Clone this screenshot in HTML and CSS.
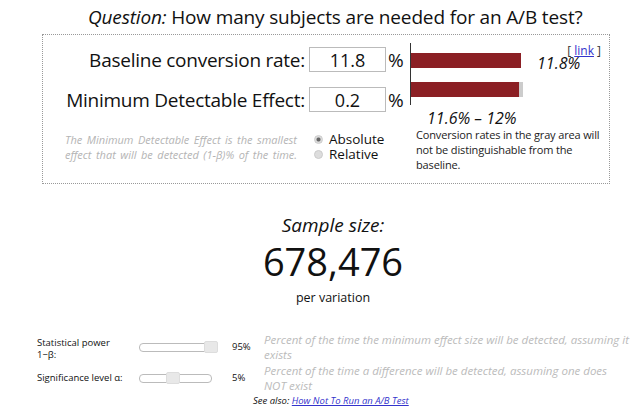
FILE: index.html
```html
<!DOCTYPE html>
<html lang="en">
  <head>
    <meta charset="utf-8" />
    <title>Sample Size Calculator</title>
    <meta name="viewport" content="width=device-width, initial-scale=1" />
    <link rel="stylesheet" href="styles.css">
  </head>

  <body>
    <h1 class="question"><em>Question:</em> How many subjects are needed for an A/B test?</h1>

    <div class="box">
      <div class="form">
        <div class="row">
          <label class="label">Baseline conversion rate:</label>
          <input class="num" type="text" value="11.8" />
          <span class="pct">%</span>
        </div>
        <div class="row">
          <label class="label">Minimum Detectable Effect:</label>
          <input class="num" type="text" value="0.2" />
          <span class="pct">%</span>
        </div>
        <div class="mde">
          <p class="hint">The Minimum Detectable Effect is the smallest effect that will be detected (1-β)% of the time.</p>
          <div class="radios">
            <div class="radio checked"><span class="dot"></span>Absolute</div>
            <div class="radio"><span class="dot"></span>Relative</div>
          </div>
        </div>
      </div>

      <div class="chart">
        <a class="permalink">[ <span>link</span> ]</a>
        <div class="bars">
          <div class="bar-row">
            <div class="bar" style="width: 110px"></div>
            <span class="bar-value">11.8%</span>
          </div>
          <div class="bar-row">
            <div class="bar" style="width: 108px"></div>
            <div class="bar gray" style="width: 4px"></div>
          </div>
        </div>
        <div class="range">11.6% – 12%</div>
        <p class="note">Conversion rates in the gray area will not be distinguishable from the baseline.</p>
      </div>
    </div>

    <div class="result">
      <div class="result-title">Sample size:</div>
      <div class="result-value">678,476</div>
      <div class="result-sub">per variation</div>
    </div>

    <div class="settings">
      <div class="setting">
        <div class="setting-name two-line">Statistical power<br />1−β:</div>
        <div class="slider"><div class="track"></div><div class="thumb" style="left: 65px"></div></div>
        <div class="setting-value">95%</div>
        <div class="setting-desc">Percent of the time the minimum effect size will be detected, assuming it exists</div>
      </div>
      <div class="setting">
        <div class="setting-name">Significance level α:</div>
        <div class="slider short"><div class="track"></div><div class="thumb" style="left: 27px"></div></div>
        <div class="setting-value">5%</div>
        <div class="setting-desc">Percent of the time a difference will be detected, assuming one does NOT exist</div>
      </div>
    </div>

    <div class="see-also">See also: <a href="#">How Not To Run an A/B Test</a></div>
  </body>
</html>
```

FILE: styles.css
```css
/* Layout and font */

html,
body {
  margin: 0;
  background: #fff;
  color: #111;
  font-family: "Open Sans", "Noto Sans", sans-serif;
}

body {
  width: 640px;
}

.question {
  margin: 0;
  padding-top: 5px;
  padding-left: 88px;
  font-size: 19px;
  font-weight: normal;
  line-height: 24px;
  letter-spacing: -0.15px;
}

/* Top box */

.box {
  margin: 5px 0 0 42px;
  width: 566px;
  height: 148px;
  border: 1px dotted #999;
  display: grid;
  grid-template-columns: 367px 1fr;
}

.form {
  padding-top: 12px;
}

.row {
  display: flex;
  align-items: center;
  height: 25px;
  margin-bottom: 15px;
}

.label {
  width: 262px;
  text-align: right;
  font-size: 19px;
  letter-spacing: -0.25px;
  padding-right: 4px;
}

.num {
  box-sizing: border-box;
  width: 77px;
  height: 25px;
  border: 1px solid #bbb;
  font-family: inherit;
  font-size: 18px;
  text-align: center;
  padding: 0;
  color: #111;
}

.pct {
  font-size: 19px;
  padding-left: 2px;
}

.mde {
  display: flex;
  margin-top: 20px;
  padding-left: 22px;
}

.hint {
  width: 232px;
  margin: 0;
  font-size: 11px;
  line-height: 15px;
  font-style: italic;
  color: #b4b4b4;
  text-align: justify;
  text-align-last: justify;
}

.radios {
  padding-left: 17px;
  font-size: 13.5px;
  line-height: 15px;
}

.radio {
  display: flex;
  align-items: center;
}

.dot {
  width: 9px;
  height: 9px;
  border-radius: 50%;
  background: #ddd;
  border: 1px solid #ccc;
  margin-right: 6px;
  box-sizing: border-box;
}

.radio.checked .dot {
  background: radial-gradient(circle, #666 0 1.5px, #ddd 2.5px);
}

/* Chart */

.chart {
  position: relative;
  font-size: 12px;
}

.permalink {
  position: absolute;
  top: 7px;
  right: 8px;
  font-size: 12px;
  color: #333;
}

.permalink span {
  color: #33c;
  text-decoration: underline;
}

.bars {
  margin-top: 8px;
  border-left: 1px solid #333;
  height: 62px;
  padding-top: 10px;
  box-sizing: border-box;
}

.bar-row {
  display: flex;
  align-items: center;
  height: 15px;
  margin-bottom: 14px;
}

.bar {
  height: 15px;
  background: #8b1f24;
}

.bar.gray {
  background: #ccc;
}

.bar-value {
  font-size: 16px;
  font-style: italic;
  padding-left: 16px;
  margin-top: 4px;
}

.range {
  padding-left: 17px;
  margin-top: 4px;
  font-size: 16px;
  font-style: italic;
  line-height: 18px;
}

.note {
  margin: 0;
  padding-left: 6px;
  width: 192px;
  font-size: 11px;
  letter-spacing: -0.15px;
  line-height: 15px;
  color: #222;
}

/* Result */

.result {
  text-align: center;
  padding-left: 26px;
  margin-top: 28px;
}

.result-title {
  font-size: 19px;
  font-style: italic;
  line-height: 26px;
}

.result-value {
  font-size: 38px;
  line-height: 46px;
}

.result-sub {
  font-size: 12.5px;
  line-height: 20px;
  margin-top: 4px;
}

/* Settings */

.settings {
  margin-top: 23px;
  padding-left: 37px;
}

.setting {
  display: grid;
  grid-template-columns: 102px 93px 32px 366px;
  align-items: center;
  min-height: 31px;
}

.setting-name {
  font-size: 9.5px;
  line-height: 12px;
}

.setting-name.two-line {
  padding-top: 4px;
}

.slider {
  position: relative;
  width: 80px;
  height: 12px;
}

.slider.short {
  width: 73px;
}

.track {
  position: absolute;
  left: 0;
  right: 0;
  top: 2px;
  height: 7px;
  border: 1px solid #bbb;
  border-radius: 4px;
  background: #fff;
}

.slider:not(.short) .track {
  right: 2px;
}

.thumb {
  position: absolute;
  top: 0;
  width: 14px;
  height: 12px;
  border: 1px solid #ddd;
  border-radius: 2px;
  background: #e8e8e8;
  box-sizing: border-box;
}

.setting-value {
  font-size: 9.5px;
}

.setting-desc {
  font-size: 11.5px;
  line-height: 15px;
  font-style: italic;
  color: #bbb;
}

.see-also {
  padding-left: 253px;
  font-size: 9.5px;
  font-style: italic;
  line-height: 12px;
  margin-top: 2px;
}

.see-also a {
  color: #33c;
}
```
